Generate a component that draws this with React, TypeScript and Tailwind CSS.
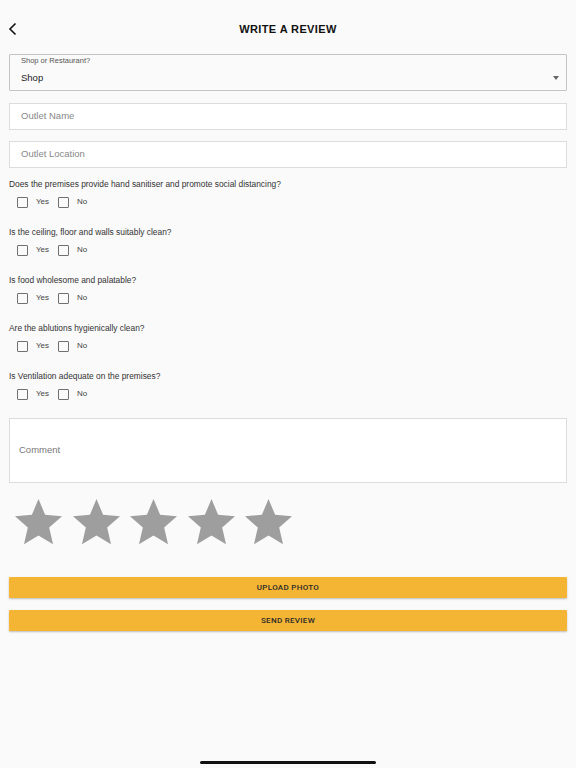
import React from 'react'

const questions = [
  'Does the premises provide hand sanitiser and promote social distancing?',
  'Is the ceiling, floor and walls suitably clean?',
  'Is food wholesome and palatable?',
  'Are the ablutions hygienically clean?',
  'Is Ventilation adequate on the premises?',
]

function Star() {
  return (
    <svg viewBox="2 2 20 19.3" className="w-[47px] h-[46px]" preserveAspectRatio="none">
      <path
        d="M12 17.27L18.18 21l-1.64-7.03L22 9.24l-7.19-.61L12 2 9.19 8.63 2 9.24l5.46 4.73L5.82 21z"
        fill="#9e9e9e"
      />
    </svg>
  )
}

function Check({ label }: { label: string }) {
  return (
    <label className="flex items-center">
      <span className="w-[11px] h-[11px] border-[1.5px] border-[#707070] rounded-[1px] bg-transparent" />
      <span className="ml-[8px] text-[8px] text-[#444]">{label}</span>
    </label>
  )
}

export default function App() {
  return (
    <div
      className="relative w-[576px] h-[768px] bg-[#fafafa] text-[#333] overflow-hidden"
      style={{ fontFamily: '"Liberation Sans", Arial, sans-serif' }}
    >
      {/* header */}
      <div className="relative h-[54px] pt-[4px] flex items-center justify-center">
        <button className="absolute left-[8px] top-[22px] w-[10px] h-[14px]">
          <svg viewBox="0 0 10 14" className="w-[10px] h-[14px]">
            <polyline points="7.5,1.5 2,7 7.5,12.5" fill="none" stroke="#111" strokeWidth="1.6" />
          </svg>
        </button>
        <h1 className="text-[11px] font-bold tracking-[0.4px] text-[#111]">WRITE A REVIEW</h1>
      </div>

      <div className="px-[9px]">
        {/* select */}
        <div className="relative h-[37px] border border-[#c4c4c4] rounded-[1px] bg-[#fafafa] px-[11px]">
          <p className="text-[7.5px] text-[#555] leading-[12px]">Shop or Restaurant?</p>
          <p className="mt-[5px] text-[9.5px] text-[#222] leading-[12px]">Shop</p>
          <span className="absolute right-[7px] top-[21px] w-0 h-0 border-l-[3px] border-r-[3px] border-t-[4px] border-l-transparent border-r-transparent border-t-[#666]" />
        </div>

        <div className="mt-[12px] h-[27px] border border-[#dcdcdc] bg-white flex items-center px-[11px]">
          <span className="text-[9.5px] text-[#888]">Outlet Name</span>
        </div>
        <div className="mt-[11px] h-[27px] border border-[#dcdcdc] bg-white flex items-center px-[11px]">
          <span className="text-[9.5px] text-[#888]">Outlet Location</span>
        </div>

        {/* questions */}
        <div className="mt-[10px] flex flex-col gap-[16px]">
          {questions.map((q) => (
            <div key={q}>
              <p className="h-[12px] leading-[12px] text-[8.4px] text-[#333]">{q}</p>
              <div className="mt-[4px] h-[16px] flex items-center pl-[8px] gap-[9px]">
                <Check label="Yes" />
                <Check label="No" />
              </div>
            </div>
          ))}
        </div>

        {/* comment */}
        <div className="mt-[16px] h-[65px] border border-[#dcdcdc] bg-white flex items-center px-[9px]">
          <span className="text-[9.5px] text-[#777]">Comment</span>
        </div>

        {/* stars */}
        <div className="mt-[16px] ml-[6px] flex gap-[10.5px]">
          <Star />
          <Star />
          <Star />
          <Star />
          <Star />
        </div>

        {/* buttons */}
        <div className="mt-[32px] flex flex-col gap-[12px]" style={{ fontFamily: 'Roboto, sans-serif' }}>
          <button className="h-[21px] w-full bg-[#f4b434] text-[8px] font-medium tracking-[0.3px] text-[#2a2a2a] shadow-[0_1px_2px_rgba(0,0,0,0.25)] rounded-[1px]">
            UPLOAD PHOTO
          </button>
          <button className="h-[21px] w-full bg-[#f4b434] text-[8px] font-medium tracking-[0.3px] text-[#2a2a2a] shadow-[0_1px_2px_rgba(0,0,0,0.25)] rounded-[1px]">
            SEND REVIEW
          </button>
        </div>
      </div>

      {/* home indicator */}
      <div className="absolute left-[200px] bottom-[4px] w-[176px] h-[3px] rounded-full bg-[#111]" />
    </div>
  )
}
